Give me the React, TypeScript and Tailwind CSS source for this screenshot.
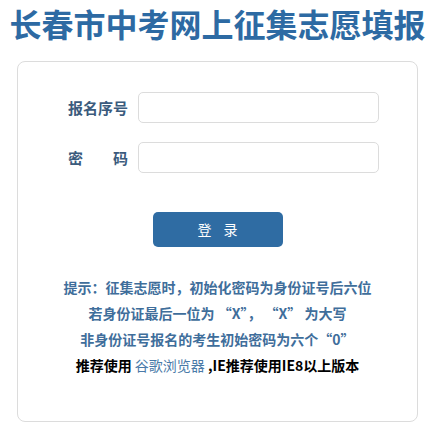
import React from 'react';

const FONT = '[font-family:"Noto_Sans_CJK_SC","Noto_Sans",sans-serif]';

const Field = ({ label }: { label: React.ReactNode }) => (
  <div className="flex items-center">
    <div className="w-[60px] ml-[50px] text-[15px] font-bold text-[#3b5b7d] leading-none">{label}</div>
    <input
      type="text"
      className="ml-[10px] w-[241px] h-[31px] rounded-[5px] border border-[#dcdcdc] bg-white outline-none px-2 text-sm"
    />
  </div>
);

export default function App() {
  return (
    <div className={`${FONT} bg-white w-[431px] min-h-[428px] overflow-hidden`}>
      <div className="h-[46px] flex items-center justify-center">
        <h1 className="text-[32px] font-bold text-[#2d6aa3] leading-none whitespace-nowrap ml-[4px]">
          长春市中考网上征集志愿填报
        </h1>
      </div>

      <div className="mt-[15px] ml-[17px] w-[401px] h-[361px] rounded-[8px] border border-[#dcdcdc] pt-[30px]">
        <Field label="报名序号" />
        <div className="mt-[19px]">
          <Field
            label={
              <div className="flex justify-between">
                <span>密</span>
                <span>码</span>
              </div>
            }
          />
        </div>

        <div className="flex justify-center mt-[39px]">
          <button className="w-[130px] h-[35px] rounded-[5px] bg-[#2f6ca3] text-white text-[14px] tracking-[12px] pl-[12px]">
            登录
          </button>
        </div>

        <div className="mt-[27px] text-center text-[14px] font-bold leading-[26px] text-[#3f6e9b]">
          <p>提示：征集志愿时，初始化密码为身份证号后六位</p>
          <p>若身份证最后一位为 “X”，  “X” 为大写</p>
          <p>非身份证号报名的考生初始密码为六个“0”</p>
          <p className="text-black">
            推荐使用 <span className="font-normal text-[#4a7aa8]">谷歌浏览器</span> ,IE推荐使用IE8以上版本
          </p>
        </div>
      </div>
    </div>
  );
}
